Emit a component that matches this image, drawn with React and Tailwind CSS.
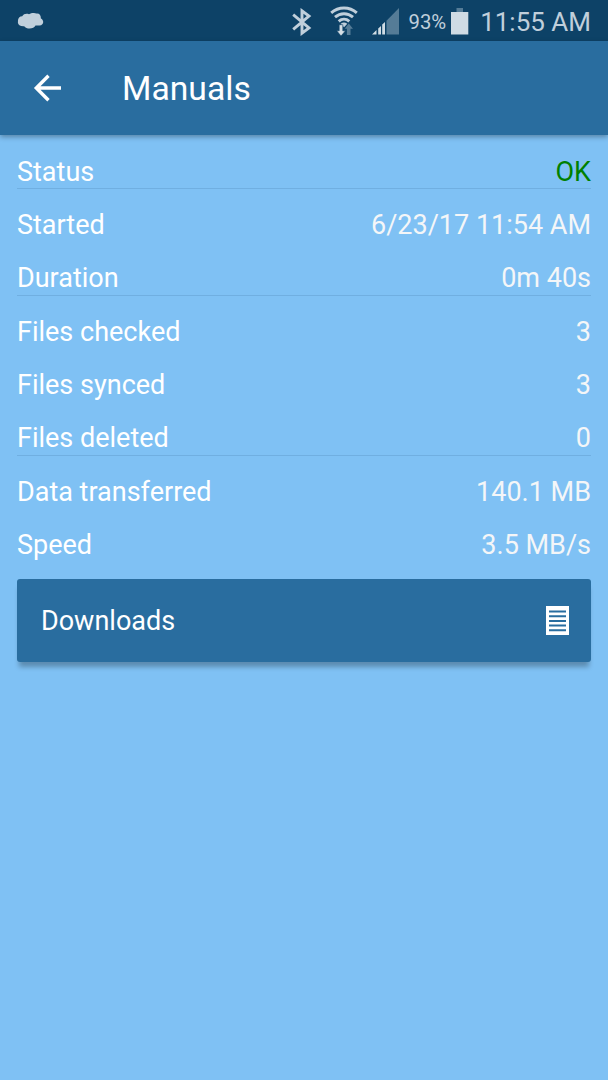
const groups = [
  [{ label: "Status", value: "OK", tone: "text-[#008000]" }],
  [
    { label: "Started", value: "6/23/17 11:54 AM" },
    { label: "Duration", value: "0m 40s" },
  ],
  [
    { label: "Files checked", value: "3" },
    { label: "Files synced", value: "3" },
    { label: "Files deleted", value: "0" },
  ],
  [
    { label: "Data transferred", value: "140.1 MB" },
    { label: "Speed", value: "3.5 MB/s" },
  ],
];

function CloudIcon() {
  return (
    <svg className="ml-[17px] h-[18px] w-[27px]" viewBox="0 0 27 18" fill="#c0cfdb">
      <path d="M1 9.500C.6 6.500 2.500 4.200 5.200 4.200C6.500 1.800 9.500 1.200 12 2.200C14.500 .6 18 .8 19 1.600C22 .8 24 3 23.900 6.500C27.300 8 27 13 22.500 13.500H18.500C17 17.300 9.500 17.600 7.200 14.200C3 14.500 .3 12.500 1 9.500Z" />
    </svg>
  );
}

function BluetoothIcon() {
  return (
    <svg className="h-7 w-5" viewBox="0 0 20 28" fill="none" stroke="#c0cfdb" strokeWidth="2.900">
      <path d="M1.200 6.700L17 20L10 25.200V2.800L17 8L1.200 21.300" />
    </svg>
  );
}

function WifiIcon() {
  return (
    <svg className="ml-[18px] h-8 w-7" viewBox="0 0 28 32" fill="none" stroke="#c0cfdb" strokeWidth="2.900">
      <path d="M1.200 6.900C8.500.4 19.500.4 26.800 6.900" />
      <path d="M5 11.200C10.300 6.500 17.700 6.500 23 11.200" />
      <path d="M8.700 15.300C11.900 12.500 16.100 12.500 19.300 15.300" />
      <path d="M10.700 17.700Q14 15.500 17.300 17.700L14 21.300Z" fill="#c0cfdb" stroke="none" />
      <path d="M9.200 18.700H12.800V24.800H15.500L11 30L6.700 24.800H9.200Z" fill="#d5dfe6" stroke="#0d4267" strokeWidth="0.600" />
      <path d="M16.900 29V22.800H14.700L18.800 17.500L23 22.800H20.500V29Z" fill="#557c97" stroke="none" />
    </svg>
  );
}

function SignalIcon() {
  return (
    <svg className="ml-[14px] h-7 w-7" viewBox="0 0 28 28">
      <path d="M14.500 26.500V12.800L27 0V26.500Z" fill="#557c97" />
      <path d="M0 26.500L4.500 22V26.500ZM6.200 26.500V20.500L9 18V26.500ZM10.200 26.500V16.500L13 14V26.500Z" fill="#d0dce4" />
    </svg>
  );
}

function BatteryIcon() {
  return (
    <svg className="ml-[5px] h-7 w-[18px]" viewBox="0 0 18 28">
      <path d="M5.500 0H12V4H5.500Z" fill="#557c97" />
      <path d="M0 4H17.300V26.500H0Z" fill="#cfdbe4" />
    </svg>
  );
}

function StatusBar() {
  return (
    <div className="flex h-[41px] items-center justify-between bg-[#0d4267] pr-[17px] text-[#c0cfdb]">
      <CloudIcon />
      <div className="flex h-full items-center pt-[2px]">
        <BluetoothIcon />
        <WifiIcon />
        <SignalIcon />
        <span className="ml-[8px] text-[20.300px] leading-6">93%</span>
        <BatteryIcon />
        <span className="ml-[11px] text-[26px] leading-8">11:55 AM</span>
      </div>
    </div>
  );
}

function Header() {
  return (
    <header className="relative flex h-[94px] items-center bg-[#296d9f] pl-[33px] text-white shadow-[0_2px_5px_rgba(0,0,0,0.32)]">
      <svg className="h-7 w-7" viewBox="0 0 28 28" fill="none" stroke="currentColor" strokeWidth="3.400">
        <path d="M28 14H3.500M15.500 1.800L3.300 14L15.500 26.200" />
      </svg>
      <h1 className="ml-[61px] pt-[2px] text-[33.700px] leading-10">Manuals</h1>
    </header>
  );
}

export default function App() {
  return (
    <div className="h-[1080px] w-[608px] overflow-hidden bg-[#7fc1f4] font-['Roboto',sans-serif]">
      <StatusBar />
      <Header />
      <main className="px-[17px] pt-[0.700px]">
        {groups.map((rows, index) => (
          <section key={index} className={index < groups.length - 1 ? "border-b border-[#70afe1]" : ""}>
            {rows.map(({ label, value, tone }, i) => (
              <div
                key={label}
                className={`flex items-end justify-between text-[27px] leading-8 ${i === rows.length - 1 && index < 3 ? "h-[52.330px] pb-[0.300px]" : "h-[53.330px] pb-px"}`}
              >
                <span className="text-white">{label}</span>
                <span className={tone || "text-[#f4f6f8]"}>{value}</span>
              </div>
            ))}
          </section>
        ))}
        <button className="mt-[16.300px] flex h-[83px] w-full items-center justify-between rounded-[3px] bg-[#296d9f] pr-[22px] pl-6 text-[27px] text-white shadow-[0_7px_5px_-2px_rgba(0,0,0,0.28)]">
          <span className="pt-[3px]">Downloads</span>
          <svg className="mt-px h-[29px] w-[23px]" viewBox="0 0 23 29">
            <path d="M0 0H23V29H0Z" fill="white" />
            <path d="M3 5.500H20M3 10.200H20M3 14.900H20M3 19.600H20M3 24.300H20" stroke="#296d9f" strokeWidth="2" />
          </svg>
        </button>
      </main>
    </div>
  );
}
